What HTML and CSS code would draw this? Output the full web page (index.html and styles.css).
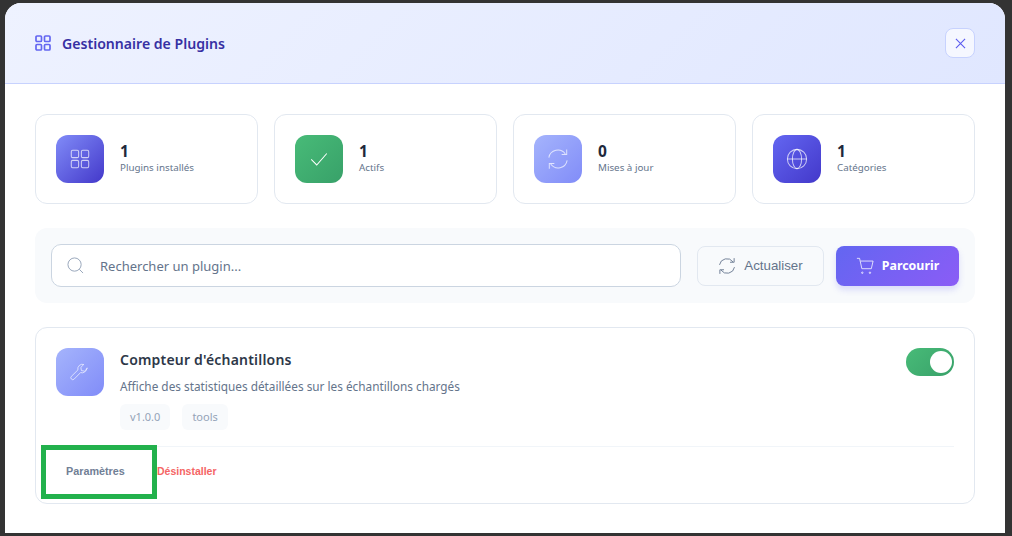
FILE: index.html
```html
<!DOCTYPE html>
<html lang="fr">
<head>
  <meta charset="UTF-8" />
  <meta name="viewport" content="width=device-width, initial-scale=1.0" />
  <title>Gestionnaire de Plugins</title>
  <link rel="stylesheet" href="styles.css">
</head>
<body>
  <div class="modal">
    <header class="modal-header">
      <h1 class="modal-title">
        <svg class="title-icon" viewBox="0 0 16 16"><rect x="1" y="1" width="5.500" height="5.500" rx="1"/><rect x="9.500" y="1" width="5.500" height="5.500" rx="1"/><rect x="1" y="9.500" width="5.500" height="5.500" rx="1"/><rect x="9.500" y="9.500" width="5.500" height="5.500" rx="1"/></svg>
        Gestionnaire de Plugins
      </h1>
      <button class="close-btn" aria-label="Fermer">
        <svg viewBox="0 0 12 12"><path d="M1 1l10 10M11 1L1 11"/></svg>
      </button>
    </header>

    <main class="modal-body">
      <section class="stats">
        <div class="stat">
          <div class="tile tile-indigo">
            <svg viewBox="0 0 24 24"><rect x="2.500" y="2.500" width="8" height="8" rx="1.500"/><rect x="13.500" y="2.500" width="8" height="8" rx="1.500"/><rect x="2.500" y="13.500" width="8" height="8" rx="1.500"/><rect x="13.500" y="13.500" width="8" height="8" rx="1.500"/></svg>
          </div>
          <div><div class="stat-num">1</div><div class="stat-label">Plugins installés</div></div>
        </div>
        <div class="stat">
          <div class="tile tile-green">
            <svg viewBox="0 0 24 24"><path d="M3.500 12.500l6 6L20.500 6"/></svg>
          </div>
          <div><div class="stat-num">1</div><div class="stat-label">Actifs</div></div>
        </div>
        <div class="stat">
          <div class="tile tile-light">
            <svg viewBox="0 0 24 24"><path d="M2 10.500A10 10 0 0 1 20 6.500M21.500 1.500v5.500h-5.500M22 13.500A10 10 0 0 1 4 17.500M2.500 22.500V17h5.500"/></svg>
          </div>
          <div><div class="stat-num">0</div><div class="stat-label">Mises à jour</div></div>
        </div>
        <div class="stat">
          <div class="tile tile-deep">
            <svg viewBox="0 0 24 24"><circle cx="12" cy="12" r="10.500"/><ellipse cx="12" cy="12" rx="5" ry="10.500"/><path d="M1.500 12h21"/></svg>
          </div>
          <div><div class="stat-num">1</div><div class="stat-label">Catégories</div></div>
        </div>
      </section>

      <section class="toolbar">
        <div class="search">
          <svg class="search-icon" viewBox="0 0 18 18"><circle cx="8" cy="8" r="7"/><path d="M13 13l4 4"/></svg>
          <span class="search-text">Rechercher un plugin...</span>
        </div>
        <button class="btn-refresh">
          <svg viewBox="0 0 24 24"><path d="M2 10.500A10 10 0 0 1 20 6.500M21.500 1.500v5.500h-5.500M22 13.500A10 10 0 0 1 4 17.500M2.500 22.500V17h5.500"/></svg>
          Actualiser
        </button>
        <button class="btn-browse">
          <svg viewBox="0 0 20 20"><path d="M1 1.500h3l2.500 11.500h10.500l2-8.500H5"/><circle cx="7" cy="17.500" r=".8"/><circle cx="15.500" cy="17.500" r=".8"/></svg>
          Parcourir
        </button>
      </section>

      <article class="plugin">
        <div class="plugin-top">
          <div class="tile tile-light">
            <svg class="wrench" viewBox="0 0 24 24"><path d="M20 7.500a5.500 5.500 0 0 1-7.300 5.200L5 20.500a2.300 2.300 0 0 1-3.300-3.300l7.800-7.700A5.500 5.500 0 0 1 16.500 3l-3.500 3.500 .7 3.800 3.800 .7L21 7.500z"/></svg>
          </div>
          <div class="plugin-info">
            <h2 class="plugin-name">Compteur d'échantillons</h2>
            <p class="plugin-desc">Affiche des statistiques détaillées sur les échantillons chargés</p>
            <div class="tags"><span class="tag">v1.0.0</span><span class="tag">tools</span></div>
          </div>
          <div class="toggle"><span class="knob"></span></div>
        </div>
        <div class="plugin-actions">
          <button class="link-btn settings">Paramètres</button>
          <button class="link-btn remove">Désinstaller</button>
        </div>
      </article>
    </main>
  </div>
  <div class="highlight"></div>
</body>
</html>
```
FILE: styles.css
```css
* {
  box-sizing: border-box;
}
body {
  margin: 0;
  height: 536px;
  padding: 3px 7px 3px 5px;
  background-color: #333;
  font-family: "Noto Sans", "Open Sans", sans-serif;
  overflow: hidden;
}
button {
  font-family: inherit;
  cursor: pointer;
}
.modal {
  height: 530px;
  background: white;
  border-radius: 16px 16px 0 0;
  overflow: hidden;
}
.modal-header {
  display: flex;
  align-items: center;
  justify-content: space-between;
  height: 81px;
  padding: 0 30px;
  background: linear-gradient(135deg, #eef2ff, #e0e7ff);
  border-bottom: 1px solid #c7d2fe;
}
.modal-title {
  display: flex;
  align-items: center;
  gap: 11px;
  margin: 0;
  font-size: 14.100px;
  font-weight: 600;
  color: #3730a3;
}
.title-icon {
  width: 16px;
  height: 16px;
  fill: none;
  stroke: #6366f1;
  stroke-width: 1.700;
}
.close-btn {
  display: flex;
  align-items: center;
  justify-content: center;
  width: 30px;
  height: 30px;
  padding: 0;
  background: #f5f7ff;
  border: 1px solid #c7d2fe;
  border-radius: 8px;
}
.close-btn svg {
  width: 11px;
  height: 11px;
  fill: none;
  stroke: #5b5bf0;
  stroke-width: 1.200;
}
.modal-body {
  padding: 30px;
}
.stats {
  display: grid;
  grid-template-columns: repeat(4, 1fr);
  gap: 16px;
}
.stat {
  display: flex;
  align-items: center;
  gap: 16px;
  height: 90px;
  padding: 0 20px;
  background: white;
  border: 1px solid #e2e8f0;
  border-radius: 12px;
}
.tile {
  display: flex;
  align-items: center;
  justify-content: center;
  flex: none;
  width: 48px;
  height: 48px;
  border-radius: 12px;
}
.tile svg {
  width: 22px;
  height: 22px;
  fill: none;
  stroke: rgba(255, 255, 255, 0.7);
  stroke-width: 1.100;
}
.tile .wrench {
  width: 20px;
  height: 20px;
}
.tile-indigo {
  background: linear-gradient(135deg, #818cf8, #4338ca);
}
.tile-green {
  background: linear-gradient(135deg, #48bb78, #38a169);
}
.tile-green svg {
  stroke: white;
}
.tile-light {
  background: linear-gradient(135deg, #a5b4fc, #818cf8);
}
.tile-deep {
  background: linear-gradient(135deg, #6366f1, #4338ca);
}
.stat-num {
  margin-top: -1px;
  font-size: 15.500px;
  font-weight: 700;
  line-height: 18px;
  color: #1e293b;
}
.stat-label {
  font-size: 9.800px;
  line-height: 15px;
  color: #64748b;
}
.toolbar {
  display: flex;
  align-items: center;
  gap: 12px;
  margin-top: 24px;
  padding: 16px;
  background: #f8fafc;
  border-radius: 12px;
}
.search {
  display: flex;
  align-items: center;
  flex: 1;
  height: 43px;
  margin-right: 4px;
  padding: 0 15px;
  background: white;
  border: 1px solid #cbd5e1;
  border-radius: 10px;
}
.search-icon {
  width: 17px;
  height: 17px;
  fill: none;
  stroke: #94a3b8;
  stroke-width: 1;
}
.search-text {
  margin-left: 16px;
  font-size: 13px;
  color: #64748b;
}
.btn-refresh,
.btn-browse {
  display: flex;
  align-items: center;
  justify-content: center;
  gap: 8px;
  height: 40px;
  border-radius: 8px;
  font-size: 12.400px;
}
.btn-refresh {
  width: 127px;
  background: #f8fafc;
  border: 1px solid #e2e8f0;
  color: #64748b;
  font-family: "Liberation Sans", Arial, sans-serif;
  font-size: 13.300px;
}
.btn-refresh svg {
  width: 18px;
  height: 18px;
  fill: none;
  stroke: #718096;
  stroke-width: 1.300;
}
.btn-browse {
  width: 123px;
  background: linear-gradient(135deg, #6366f1, #8b5cf6);
  border: none;
  color: white;
  font-weight: 700;
  box-shadow: 0 4px 6px rgba(99, 102, 241, 0.2);
}
.btn-browse svg {
  width: 18px;
  height: 18px;
  fill: none;
  stroke: rgba(255, 255, 255, 0.85);
  stroke-width: 1;
}
.plugin {
  height: 177px;
  margin-top: 24px;
  padding: 20px 20px 0;
  background: white;
  border: 1px solid #e2e8f0;
  border-radius: 12px;
}
.plugin-top {
  display: flex;
  gap: 16px;
  height: 98px;
}
.plugin-info {
  flex: 1;
}
.plugin-name {
  margin: 2px 0 0;
  font-size: 14px;
  font-weight: 600;
  line-height: 20px;
  letter-spacing: 0.200px;
  color: #2d3748;
}
.plugin-desc {
  margin: 9px 0 0;
  font-size: 11.800px;
  line-height: 15px;
  color: #64748b;
}
.tags {
  display: flex;
  gap: 12px;
  margin-top: 10px;
}
.tag {
  padding: 5px 10px;
  background: #f8fafc;
  border-radius: 6px;
  font-size: 11px;
  line-height: 16px;
  color: #94a3b8;
}
.toggle {
  display: flex;
  justify-content: flex-end;
  align-items: center;
  width: 48px;
  height: 28px;
  padding: 0 2px;
  background: linear-gradient(135deg, #48bb78, #38a169);
  border-radius: 14px;
}
.knob {
  width: 22px;
  height: 22px;
  background: white;
  border-radius: 50%;
}
.plugin-actions {
  display: flex;
  align-items: center;
  height: 48px;
  border-top: 1px solid #f1f5f9;
}
.link-btn {
  padding: 0;
  background: none;
  border: none;
  font-family: "Liberation Sans", Arial, sans-serif;
  font-size: 10.800px;
  font-weight: 700;
}
.settings {
  width: 101px;
  text-align: left;
  padding-left: 10px;
  color: #718096;
}
.remove {
  font-size: 10.500px;
  color: #f56565;
}
.highlight {
  position: absolute;
  left: 41px;
  top: 445px;
  width: 116px;
  height: 54px;
  border: 5px solid #22b14c;
}
```
